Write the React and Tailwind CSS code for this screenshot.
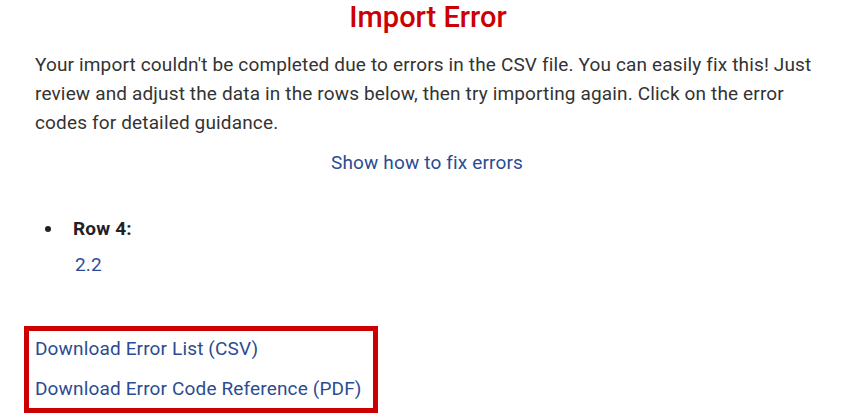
import React from "react";

const App = () => {
  return (
    <div className="min-h-screen bg-white font-['Roboto',sans-serif] text-[#333333]">
      <div className="px-[35px]">
        <h1 className="text-center pl-[14px] text-[29px] leading-[34px] font-medium text-[#cc0000]">
          Import Error
        </h1>
        <p className="mt-[16px] w-[780px] text-[19px] tracking-[0.15px] leading-[29px]">
          Your import couldn't be completed due to errors in the CSV file. You can easily fix this! Just review and adjust
          the data in the rows below, then try importing again. Click on the error codes for detailed guidance.
        </p>
        <div className="mt-[11px] text-center text-[19px] tracking-[0.15px] leading-[29px]">
          <a href="#" className="text-[#2b4c92] ml-[12px]">Show how to fix errors</a>
        </div>
        <div className="mt-[37px] flex items-center text-[19px] tracking-[0.15px] leading-[29px]">
          <span className="ml-[10px] mr-[22px] h-[6px] w-[6px] rounded-full bg-[#222222]" />
          <span className="font-bold text-[#222222]">Row 4:</span>
        </div>
        <div className="pl-[40px] mt-[7px] text-[19px] tracking-[0.15px] leading-[29px]">
          <a href="#" className="text-[#2b4c92]">2.2</a>
        </div>
      </div>
      <div className="ml-[24px] mt-[47px] w-[354px] border-[5px] border-[#cc0000] pl-[6px] pt-[3px] pb-[5px] text-[19px] tracking-[0.15px] leading-[29px]">
        <a href="#" className="block text-[#2b4c92]">Download Error List (CSV)</a>
        <a href="#" className="block mt-[11px] text-[#2b4c92]">Download Error Code Reference (PDF)</a>
      </div>
    </div>
  );
};

export default App;
